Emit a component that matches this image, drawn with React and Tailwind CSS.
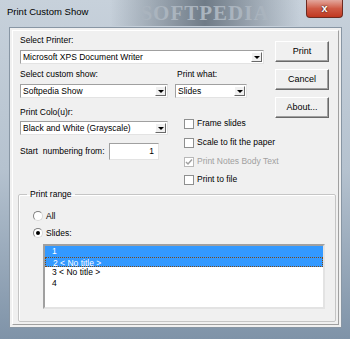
import React from 'react';

const font = { fontFamily: '"Liberation Sans", Arial, sans-serif' };

function Arrow() {
  return (
    <div className="w-[11px] h-[10px] bg-[#f0f0f0] border-t border-l border-t-white border-l-white border-b border-r border-b-[#696969] border-r-[#696969] flex items-center justify-center">
      <div className="w-0 h-0 border-x-[3px] border-x-transparent border-t-[3px] border-t-black" />
    </div>
  );
}

function Combo({ text, className }) {
  return (
    <div className={`h-[14px] bg-white border border-t-[#a0a0a0] border-l-[#a0a0a0] border-b-[#e3e3e3] border-r-[#e3e3e3] flex items-center pl-[2px] pr-[1px] ${className}`}>
      <span className="flex-1 truncate leading-[11px]">{text}</span>
      <Arrow />
    </div>
  );
}

function Btn({ children }) {
  return (
    <div className="w-[54px] h-[21px] bg-[#f0f0f0] border border-t-white border-l-white border-b-[#696969] border-r-[#696969] shadow-[inset_-1px_-1px_0_#a0a0a0] flex items-center justify-center text-[9px]">
      {children}
    </div>
  );
}

function Check({ label, checked, disabled, h }) {
  return (
    <div className={`flex items-center whitespace-nowrap ${h}`}>
      <div className={`w-[10px] h-[10px] bg-white border ${disabled ? 'border-[#b8b8b8]' : 'border-[#8e8f8f]'} flex items-center justify-center`}>
        {checked && (
          <svg width="8" height="8" viewBox="0 0 8 8">
            <path d="M1 4 L3 6 L7 1.5" stroke={disabled ? '#a0a0a0' : '#000'} strokeWidth="1.5" fill="none" />
          </svg>
        )}
      </div>
      <span className={`ml-[3px] leading-[11px] ${disabled ? 'text-[#a0a0a0]' : ''}`}>{label}</span>
    </div>
  );
}

function Radio({ label, on }) {
  return (
    <div className="flex items-center h-[12px]">
      <div className="w-[10px] h-[10px] rounded-full bg-white border border-t-[#808080] border-l-[#808080] border-b-[#d8d8d8] border-r-[#d8d8d8] flex items-center justify-center">
        {on && <div className="w-[4px] h-[4px] rounded-full bg-black" />}
      </div>
      <span className="ml-[3px] leading-[11px]">{label}</span>
    </div>
  );
}

export default function App() {
  const slides = ['1', '2 < No title >', '3 < No title >', '4'];
  return (
    <div className="w-[350px] h-[339px] relative overflow-hidden bg-gradient-to-b from-[#c7d1db] via-[#b5c2cf] to-[#7f93a8] flex flex-col" style={font}>
      {/* title bar */}
      <div className="h-[27px] flex items-start relative">
        <div className="absolute left-[110px] top-0 w-[190px] h-[26px] bg-gradient-to-r from-transparent via-[#6f7b87] to-transparent flex items-center justify-center">
          <span className="text-[21px] font-bold tracking-[1px] text-[#aab4be] leading-none" style={{ fontFamily: '"Liberation Serif", serif' }}>SOFTPEDIA</span>
        </div>
        <span className="relative pl-[7px] pt-[6px] text-[9.5px] leading-[12px] text-black">Print Custom Show</span>
        <div className="relative ml-auto mr-[7px] w-[37px] h-[18px] rounded-b-[4px] border border-t-0 border-[#6d2a20] bg-gradient-to-b from-[#e2a79d] via-[#cf5a45] to-[#c0371f] flex items-center justify-center">
          <span className="text-white font-bold text-[11px] leading-none" style={{ textShadow: '0 0 2px #000' }}>x</span>
        </div>
      </div>

      {/* client */}
      <div className="ml-[9px] mr-[8px] h-[301px] bg-[#f0f0f0] border border-[#8896a4] p-[2px]">
        <div className="h-full border border-t-white border-l-white border-b-[#a0a0a0] border-r-[#a0a0a0] pl-[5px] pr-[2px] text-[8.5px] text-black flex flex-col">
          <div className="flex ml-[2px]">
            {/* left column */}
            <div className="w-[244px] flex flex-col pt-[4px]">
              <span className="leading-[11px] h-[11px]">Select Printer:</span>
              <Combo text="Microsoft XPS Document Writer" className="mt-[4px] w-[244px]" />
              <div className="flex mt-[5px]">
                <div className="flex flex-col w-[148px]">
                  <span className="leading-[11px] h-[11px]">Select custom show:</span>
                  <Combo text="Softpedia Show" className="mt-[4px] w-[148px]" />
                </div>
                <div className="flex flex-col ml-[7px]">
                  <span className="leading-[11px] h-[11px] pl-[2px]">Print what:</span>
                  <Combo text="Slides" className="mt-[4px] w-[72px]" />
                </div>
              </div>
              <div className="flex">
                <div className="flex flex-col w-[148px]">
                  <span className="leading-[11px] h-[11px] mt-[9px]">Print Colo(u)r:</span>
                  <Combo text="Black and White (Grayscale)" className="mt-[3px] w-[148px]" />
                  <div className="flex items-center mt-[8px] whitespace-pre">
                    <span className="leading-[11px] w-[89px]">Start  numbering from:</span>
                    <div className="w-[50px] h-[17px] bg-white border border-t-[#a0a0a0] border-l-[#a0a0a0] border-b-[#e3e3e3] border-r-[#e3e3e3] flex items-center justify-end pr-[4px] leading-[11px]">1</div>
                  </div>
                </div>
                <div className="flex flex-col ml-[16px] pt-[16px]">
                  <Check label="Frame slides" h="h-[19px]" />
                  <Check label="Scale to fit the paper" h="h-[19px]" />
                  <Check label="Print Notes Body Text" checked disabled h="h-[19px]" />
                  <Check label="Print to file" h="h-[17px]" />
                </div>
              </div>
            </div>
            {/* buttons */}
            <div className="flex flex-col ml-[11px] mt-[10px] gap-[7px]">
              <Btn>Print</Btn>
              <Btn>Cancel</Btn>
              <Btn>About...</Btn>
            </div>
          </div>

          <fieldset className="mt-[1px] border border-[#c5c5c5] rounded-[2px] shadow-[inset_1px_1px_0_#fff]">
            <legend className="ml-[8px] px-[3px] leading-[11px]">Print range</legend>
            <div className="pl-[14px] pr-[10px] pb-[12px] flex flex-col">
              <div className="mt-[10px]"><Radio label="All" /></div>
              <div className="mt-[5px]"><Radio label="Slides:" on /></div>
              <div className="mt-[5px] ml-[10px] h-[65px] bg-white border-2 border-t-[#a0a0a0] border-l-[#a0a0a0] border-b-[#e3e3e3] border-r-[#e3e3e3] flex flex-col">
                {slides.map((s, i) => (
                  <div
                    key={i}
                    className={`h-[10.5px] pl-[7px] leading-[10px] whitespace-pre ${i < 2 ? 'bg-[#3399ff] text-white' : ''} ${i === 1 ? 'border border-dotted border-[#7a4a1a] pl-[6px]' : ''}`}
                  >
                    {s}
                  </div>
                ))}
              </div>
            </div>
          </fieldset>
        </div>
      </div>
    </div>
  );
}
